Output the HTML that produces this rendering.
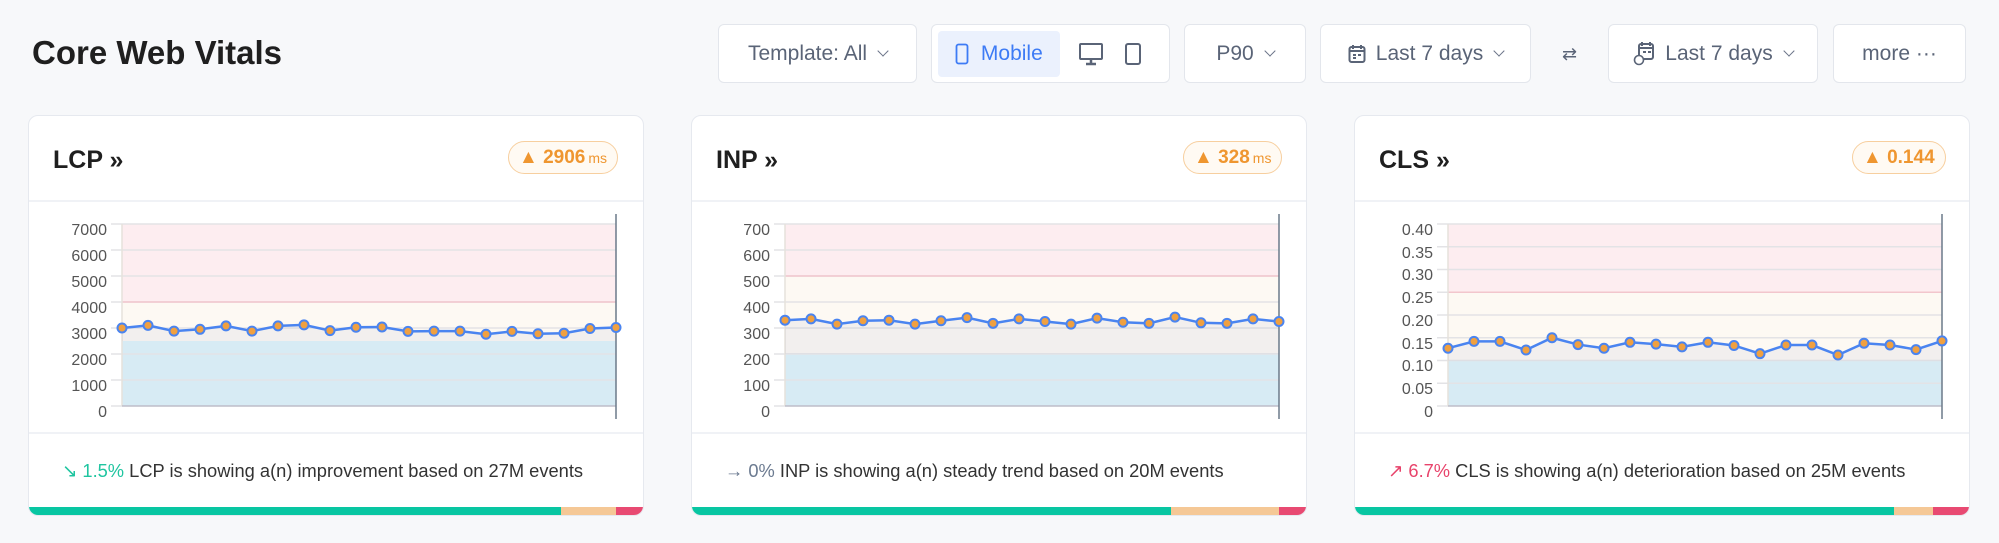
<!DOCTYPE html>
<html><head><meta charset="utf-8"><style>
*{box-sizing:border-box;margin:0;padding:0}
body{width:1999px;height:543px;background:#f7f8fa;font-family:"Liberation Sans",sans-serif;position:relative;overflow:hidden;color:#222}
h1{position:absolute;left:32px;top:34px;font-size:33px;font-weight:bold;color:#1f1f1f}
.btn{position:absolute;top:24px;height:59px;background:#fff;border:1px solid #e3e6ec;border-radius:6px;display:flex;align-items:center;justify-content:center;font-size:21px;color:#5a6477}
.chev{display:inline-block;width:8px;height:8px;border-right:1.6px solid #6b7488;border-bottom:1.6px solid #6b7488;transform:rotate(45deg);margin:-5px 0 0 12px}
.card{position:absolute;top:115px;width:616px;height:401px;background:#fff;border:1px solid #e6e9ef;border-radius:10px;overflow:hidden}
.card .t{position:absolute;left:24px;top:30px;font-size:25px;font-weight:bold;color:#1f1f1f}
.badge{position:absolute;top:25px;height:33px;border:1.5px solid #f7cf9f;border-radius:17px;background:#fffaf3;color:#ef9630;font-size:19px;font-weight:bold;display:flex;align-items:center;padding:0 10px}
.badge small{font-size:14px;font-weight:normal;margin-left:3px}
.hr1{position:absolute;left:0;right:0;top:84px;border-top:2px solid #f0f2f6}
.hr2{position:absolute;left:0;right:0;top:316px;border-top:2px solid #f0f2f6}
.ft{position:absolute;left:33px;top:344px;font-size:18.3px;color:#333}
.bar{position:absolute;left:0;bottom:0;height:8px;width:100%;display:flex}
svg{position:absolute;left:0;top:0}
svg text{font-family:"Liberation Sans",sans-serif;font-size:16px;fill:#555}
</style></head><body>
<h1>Core Web Vitals</h1>
<div class="btn" style="left:718px;width:199px">Template: All<span class="chev"></span></div>
<div class="btn" style="left:931px;width:239px;justify-content:flex-start;padding-left:6px">
 <div style="width:122px;height:46px;background:#ebf1fd;border-radius:4px;display:flex;align-items:center;justify-content:center;color:#3d7bf5">
  <svg style="position:static" width="14" height="22" viewBox="0 0 14 22"><rect x="1.5" y="1.5" width="11" height="19" rx="2" fill="none" stroke="#3d7bf5" stroke-width="1.8"/></svg>&nbsp;&nbsp;Mobile</div>
 <svg style="position:static;margin-left:18px" width="26" height="24" viewBox="0 0 26 24"><rect x="2" y="2" width="22" height="15" rx="1" fill="none" stroke="#5a6477" stroke-width="2"/><path d="M13 17v4M8 22h10" stroke="#5a6477" stroke-width="2.5"/></svg>
 <svg style="position:static;margin-left:20px" width="18" height="24" viewBox="0 0 18 24"><rect x="2" y="2" width="14" height="20" rx="2" fill="none" stroke="#5a6477" stroke-width="2"/></svg>
</div>
<div class="btn" style="left:1184px;width:122px">P90<span class="chev"></span></div>
<div class="btn" style="left:1320px;width:211px"><svg style="position:static;margin-right:10px" width="18" height="20" viewBox="0 0 18 20"><rect x="1.5" y="3" width="15" height="15" rx="2" fill="none" stroke="#5a6477" stroke-width="2"/><path d="M5 1v4M13 1v4M1.5 7h15M5 11h3M10 11h3M5 14h3" stroke="#5a6477" stroke-width="2"/></svg>Last 7 days<span class="chev"></span></div>
<div style="position:absolute;left:1562px;top:44px;font-size:18px;color:#5a6477">⇄</div>
<div class="btn" style="left:1608px;width:210px"><svg style="position:static;margin-right:8px" width="24" height="26" viewBox="0 0 24 26"><rect x="6" y="3" width="14" height="15" rx="2" fill="none" stroke="#5a6477" stroke-width="2"/><path d="M9 1v4M17 1v4M6 7h14M10 11h3M15 11h3" stroke="#5a6477" stroke-width="2"/><circle cx="6" cy="19" r="4.5" fill="#fff" stroke="#5a6477" stroke-width="1.6"/></svg>Last 7 days<span class="chev"></span></div>
<div class="btn" style="left:1833px;width:133px">more &middot;&middot;&middot;</div>

<div class="card" style="left:28px"><div class="t">LCP »</div><div class="badge" style="left:479px">▲&nbsp;2906<small>ms</small></div><div class="hr1"></div><div class="hr2"></div>
<svg id="s0" width="616" height="320"><text x="78" y="119" text-anchor="end">7000</text><text x="78" y="145" text-anchor="end">6000</text><text x="78" y="171" text-anchor="end">5000</text><text x="78" y="197" text-anchor="end">4000</text><text x="78" y="223" text-anchor="end">3000</text><text x="78" y="249" text-anchor="end">2000</text><text x="78" y="275" text-anchor="end">1000</text><text x="78" y="301" text-anchor="end">0</text></svg>
<div class="ft"><span style="color:#1fc5a0">↘ 1.5%</span> LCP is showing a(n) improvement based on 27M events</div>
<div class="bar"><div style="width:532px;background:#08c6a2"></div><div style="width:55px;background:#f5c896"></div><div style="flex:1;background:#e84a72"></div></div></div>

<div class="card" style="left:691px"><div class="t">INP »</div><div class="badge" style="left:491px">▲&nbsp;328<small>ms</small></div><div class="hr1"></div><div class="hr2"></div>
<svg id="s1" width="616" height="320"><text x="78" y="119" text-anchor="end">700</text><text x="78" y="145" text-anchor="end">600</text><text x="78" y="171" text-anchor="end">500</text><text x="78" y="197" text-anchor="end">400</text><text x="78" y="223" text-anchor="end">300</text><text x="78" y="249" text-anchor="end">200</text><text x="78" y="275" text-anchor="end">100</text><text x="78" y="301" text-anchor="end">0</text></svg>
<div class="ft"><span style="color:#6b7a90">→ 0%</span> INP is showing a(n) steady trend based on 20M events</div>
<div class="bar"><div style="width:479px;background:#08c6a2"></div><div style="width:108px;background:#f5c896"></div><div style="flex:1;background:#e84a72"></div></div></div>

<div class="card" style="left:1354px"><div class="t">CLS »</div><div class="badge" style="left:497px">▲&nbsp;0.144</div><div class="hr1"></div><div class="hr2"></div>
<svg id="s2" width="616" height="320"><text x="78" y="119" text-anchor="end">0.40</text><text x="78" y="142" text-anchor="end">0.35</text><text x="78" y="164" text-anchor="end">0.30</text><text x="78" y="187" text-anchor="end">0.25</text><text x="78" y="210" text-anchor="end">0.20</text><text x="78" y="233" text-anchor="end">0.15</text><text x="78" y="255" text-anchor="end">0.10</text><text x="78" y="278" text-anchor="end">0.05</text><text x="78" y="301" text-anchor="end">0</text></svg>
<div class="ft"><span style="color:#e8436b">↗ 6.7%</span> CLS is showing a(n) deterioration based on 25M events</div>
<div class="bar"><div style="width:539px;background:#08c6a2"></div><div style="width:39px;background:#f5c896"></div><div style="flex:1;background:#e84a72"></div></div></div>

<script>
var cfg=[
{max:7000,step:1000,g:2500,o:4000,d:[3000,3100,2880,2950,3080,2880,3080,3120,2900,3030,3040,2870,2880,2880,2760,2870,2780,2800,2980,3020]},
{max:700,step:100,g:200,o:500,d:[330,335,315,328,330,315,328,340,318,335,325,315,338,322,318,342,320,318,335,325]},
{max:0.4,step:0.05,g:0.1,o:0.25,d:[0.127,0.142,0.142,0.123,0.150,0.135,0.127,0.140,0.136,0.130,0.140,0.133,0.115,0.134,0.134,0.112,0.138,0.134,0.124,0.143]}];
var NS="http://www.w3.org/2000/svg";
cfg.forEach(function(c,i){var s=document.getElementById("s"+i);var L=93,R=587,T=108,B=290;
function Y(v){return B-(v/c.max)*(B-T)}
function ap(n,a){var e=document.createElementNS(NS,n);for(var k in a)e.setAttribute(k,a[k]);s.appendChild(e);return e}
ap("rect",{x:L,y:Y(c.max),width:R-L,height:Y(c.o)-Y(c.max),fill:"#fdedf0"});
ap("rect",{x:L,y:Y(c.o),width:R-L,height:Y(c.g)-Y(c.o),fill:"#fdf9f3"});
ap("rect",{x:L,y:Y(c.g),width:R-L,height:B-Y(c.g),fill:"#d7ebf4"});
var n=Math.round(c.max/c.step);
for(var j=0;j<=n;j++){var y=Y(j*c.step);ap("line",{x1:82,x2:R,y1:y,y2:y,stroke:"#e3e3e6","stroke-width":1.5})}
ap("line",{x1:L,x2:R,y1:Y(c.o),y2:Y(c.o),stroke:"#f2c6cd","stroke-width":1.5});
ap("line",{x1:L,x2:L,y1:T,y2:B,stroke:"#e6e2dc","stroke-width":1.5});
var pts=c.d.map(function(v,k){return [L+k*(R-L)/19,Y(v)]});
var area="M"+L+","+Y(c.g)+" "+pts.map(function(p){return "L"+p[0]+","+p[1]}).join(" ")+" L"+R+","+Y(c.g)+"Z";
ap("path",{d:area,fill:"rgba(120,130,180,0.08)"});
ap("line",{x1:L,x2:R,y1:B,y2:B,stroke:"#aab","stroke-width":1});
ap("line",{x1:R,x2:R,y1:98,y2:303,stroke:"#6b7a8a","stroke-width":1.5});
ap("polyline",{points:pts.map(function(p){return p.join(",")}).join(" "),fill:"none",stroke:"#4a84f0","stroke-width":2.5});
pts.forEach(function(p){ap("circle",{cx:p[0],cy:p[1],r:4.5,fill:"#f0a040",stroke:"#4a84f0","stroke-width":2})});
var ts=s.querySelectorAll("text");ts.forEach(function(t){s.appendChild(t)});
});
</script>
</body></html>
